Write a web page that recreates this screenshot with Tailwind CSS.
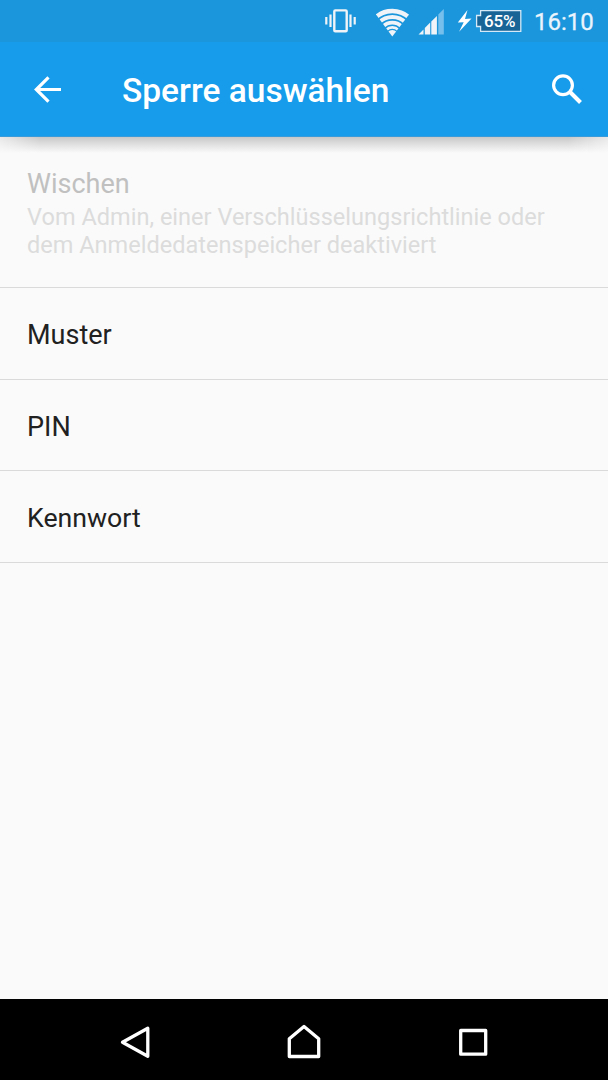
<!DOCTYPE html>
<html lang="de">
<head>
<meta charset="utf-8">
<title>Sperre auswählen</title>
<script src="https://cdn.jsdelivr.net/npm/@tailwindcss/browser@4"></script>
</head>
<body class="h-[1080px] w-[608px] overflow-hidden bg-[#fafafa] font-['Roboto',sans-serif]">
<div class="flex h-full flex-col">
  <div class="flex h-[42px] shrink-0 items-center bg-[#1b96dc] pl-[324px] text-[#e9f4fc]">
    <svg class="h-[42px] w-[34px] shrink-0" viewBox="324 0 34 42" fill="none" stroke="#f0f4f8" aria-label="Vibration">
      <rect x="334.300" y="10.400" width="12.400" height="20.800" rx="1" stroke-width="2.400"/>
      <path d="M330.500 14.500v12.500M326.300 17v7.500M350.500 14.500v12.500M354.700 17v7.500" stroke-width="2.200"/>
    </svg>
    <svg class="ml-[18px] h-[42px] w-[34px] shrink-0" viewBox="376 0 34 42" fill="none" stroke="#f0f4f8" aria-label="WLAN">
      <clipPath id="fan"><path d="M392.300 36.500L374.500 12.500V6h36v6.500z"/></clipPath>
      <g clip-path="url(#fan)">
        <circle cx="392.300" cy="36" r="25" stroke-width="4.400"/>
        <circle cx="392.300" cy="36" r="18.900" stroke-width="4"/>
        <circle cx="392.300" cy="36" r="13.300" stroke-width="3.800"/>
        <circle cx="392.300" cy="36" r="8.600" stroke-width="2.800"/>
        <circle cx="392.300" cy="36" r="3" stroke-width="6"/>
      </g>
    </svg>
    <svg class="ml-[8px] h-[42px] w-[27px] shrink-0" viewBox="418 0 27 42" fill="#f0f4f8" aria-label="Mobilfunk">
      <path d="M418.500 34.500l5-5v5zM424.800 34.500V28l5.400-5.400v11.900zM431.300 34.500V21.500l5.600-5.600v18.600z"/>
      <path d="M438.300 34.500V14.400l5.500-5.500v25.600z" fill="#76bfec"/>
    </svg>
    <svg class="ml-[12px] h-[42px] w-[17px] shrink-0" viewBox="457 0 17 42" fill="#fff" aria-label="Lädt"><path d="M467.500 10L457.800 22.500l5.900-.2-4.600 9.500L471.500 18.500l-6.500.5z"/></svg>
    <div class="relative h-[42px] w-[48px] shrink-0">
      <svg class="absolute inset-0 h-[42px] w-[48px]" viewBox="474 0 48 42" fill="#196497" stroke="#d5e9f6" stroke-width="1.300"><path d="M480.600 10.600h40.200v20.800h-40.200v-4.900h-4v-11h4z"/></svg>
      <span class="absolute left-[10px] top-[11px] text-[17px] font-medium leading-[20px] tracking-[-0.2px] text-white">65%</span>
    </div>
    <span class="ml-[12px] mt-[2px] text-[24px] leading-[28px] [-webkit-text-stroke:0.3px_#e9f4fc]">16:10</span>
  </div>
  <header class="z-10 flex h-[95px] shrink-0 items-center border-b border-[#3a9bdb] bg-[#169ceb] text-white">
    <svg class="ml-[33px] h-[28px] w-[29px]" viewBox="0 0 29 28" fill="none" stroke="currentColor" stroke-width="3.200" aria-label="Zurück"><path d="M28 14.500H3.500M15.500 2.300L3.300 14.500l12.200 12.200"/></svg>
    <h1 class="ml-[60px] mt-[4px] text-[33.500px] font-medium leading-[40px]">Sperre auswählen</h1>
    <svg class="ml-auto mr-[25px] h-[32px] w-[32px]" viewBox="551 73 32 32" fill="none" stroke="currentColor" aria-label="Suchen"><circle cx="563" cy="85.200" r="9.400" stroke-width="3.200"/><path d="M570 92l10.500 10.500" stroke-width="4"/></svg>
  </header>
  <main class="flex-1">
    <div class="h-4 bg-linear-to-b from-[#c8c8c8] via-[#e2e2e2] to-[#fafafa] [mask-image:linear-gradient(to_right,rgba(0,0,0,0.35),black_40px,black_568px,rgba(0,0,0,0.35))]"></div>
    <div class="h-[135px] border-b border-[#dadada] px-[27px] pt-[15px]">
      <div class="text-[27px] leading-[32px] text-[#c0c0c0]">Wischen</div>
      <div class="mt-[4px] text-[23.550px] leading-[27.700px] text-[#dcdcdc]">Vom Admin, einer Verschlüsselungsrichtlinie oder<br>dem Anmeldedatenspeicher deaktiviert</div>
    </div>
    <div class="flex h-[91.500px] items-center border-b border-[#dadada] px-[27px] pt-[4px] text-[27px] text-[#212121]">Muster</div>
    <div class="flex h-[91.500px] items-center border-b border-[#dadada] px-[27px] pt-[4px] text-[27px] text-[#212121]">PIN</div>
    <div class="flex h-[92px] items-center border-b border-[#dadada] px-[27px] pt-[4px] text-[26.700px] text-[#212121]">Kennwort</div>
  </main>
  <nav class="flex h-[81px] shrink-0 items-center bg-black pl-[120px]">
    <svg class="h-[81px] w-[31px]" viewBox="120 999 31 81" fill="none" stroke="#fff" stroke-width="3.300" stroke-linejoin="round" aria-label="Zurück"><path d="M122.500 1042.300l25.300-14v28z"/></svg>
    <svg class="ml-[135px] h-[81px] w-[36px]" viewBox="286 999 36 81" fill="none" stroke="#fff" stroke-width="3.300" stroke-linejoin="round" aria-label="Startseite"><path d="M289.300 1056.500v-17.700l14.700-12.300 14.700 12.300v17.700z"/></svg>
    <svg class="ml-[136px] h-[81px] w-[30px]" viewBox="458 999 30 81" fill="none" stroke="#fff" stroke-width="3.300" stroke-linejoin="round" aria-label="Übersicht"><path d="M460.700 1030.500h25v23.700h-25z"/></svg>
  </nav>
</div>
</body>
</html>
